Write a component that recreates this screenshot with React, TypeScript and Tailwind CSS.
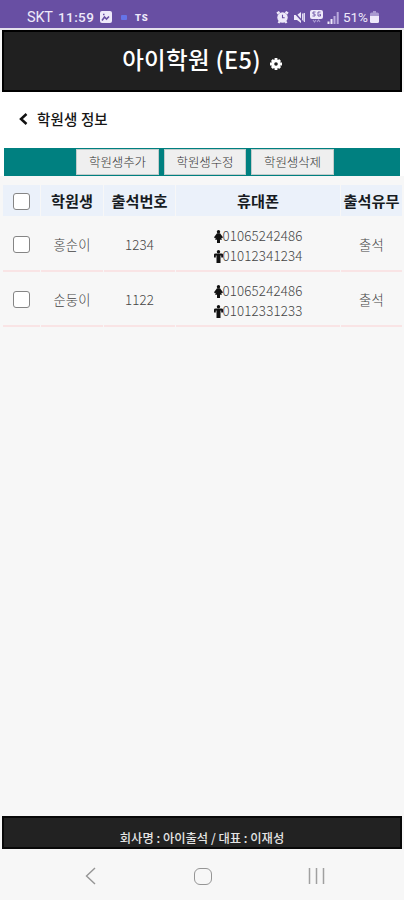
import React from "react";

const students = [
  { name: "홍순이", code: "1234", mother: "01065242486", father: "01012341234", status: "출석" },
  { name: "순둥이", code: "1122", mother: "01065242486", father: "01012331233", status: "출석" },
];

const columns = "grid grid-cols-[37px_62px_71px_164px_61px] gap-x-[1px] pl-[3px]";

function StatusBar() {
  return (
    <div className="flex h-[28px] items-start bg-[#684fa3] pt-[10px] pl-[27px] text-[#eee9fa]">
      <span className="w-[31px] text-[14.5px] leading-[15px] tracking-[-0.2px] whitespace-nowrap font-['Roboto',sans-serif]">SKT</span>
      <span className="w-[42px] text-[13.5px] leading-[15px] tracking-[0.4px] whitespace-nowrap font-medium font-['Roboto',sans-serif]">11:59</span>
      <svg className="mt-[1px] h-[12px] w-[12px]" viewBox="0 0 12 12">
        <rect width="12" height="12" rx="2" fill="currentColor" />
        <path d="M2 9.5 4.5 6l2 2L9 5.5M3 3.5h1.500" stroke="#684fa3" strokeWidth="1.6" fill="none" />
      </svg>
      <span className="mt-[5px] ml-[9px] h-[5px] w-[6px] rounded-[1px] bg-[#6574e8]" />
      <span className="mt-[3px] ml-[8px] text-[9.5px] leading-[10px] font-black tracking-[0.8px] font-['Roboto',sans-serif]">TS</span>
      <div className="ml-auto flex items-start pr-[25px]">
        <svg className="mt-[1px] mr-[4px] h-[13px] w-[13px]" viewBox="0 0 13 13">
          <path d="M1 2.5 3.5.8M12 2.5 9.5.8M2.5 12l1-1.5M10.5 12l-1-1.5" stroke="currentColor" strokeWidth="2.2" />
          <circle cx="6.5" cy="6.5" r="5.2" fill="currentColor" />
          <path d="M6.5 3.7v3h2.2" stroke="#684fa3" strokeWidth="1.1" fill="none" />
        </svg>
        <svg className="mt-[1px] mr-[5px] h-[13px] w-[12px]" viewBox="0 0 12 13">
          <path d="M1 4h3L8 1v11L4 9H1z" fill="currentColor" />
          <path d="M9.700 2.500v8M11.300 2v9" stroke="currentColor" strokeWidth="1.200" />
          <path d="M1 1 10.500 11.500" stroke="#684fa3" strokeWidth="1.500" />
        </svg>
        <svg className="mr-[4px] h-[14px] w-[13px]" viewBox="0 0 13 14">
          <rect y="0" width="13" height="9" rx="2" fill="currentColor" />
          <path d="M5.500 2H3v2h2v2H2.500M10.500 2H8v4h2.500V4.300H9.300" stroke="#684fa3" strokeWidth=".9" fill="none" />
          <path d="m3 10 1.500 2L6 10M7 12l1.500-2 1.500 2" stroke="#a99ad1" strokeWidth="1.200" fill="none" />
        </svg>
        <svg className="mt-[1px] mr-[4px] h-[13px] w-[12px]" viewBox="0 0 12 13">
          <path d="M1.500 13V10.500M4.500 13V8" stroke="currentColor" strokeWidth="2" />
          <path d="M7.500 13V5M10.700 13V1" stroke="#b9aadd" strokeWidth="2" />
        </svg>
        <span className="w-[27px] text-[13.5px] leading-[15px] tracking-[-0.1px] whitespace-nowrap font-['Roboto',sans-serif]">51%</span>
        <svg className="mt-[1px] h-[12px] w-[9px]" viewBox="0 0 9 12">
          <path d="M3 0h3v1.500h1.500Q9 1.500 9 3v2H0V3q0-1.500 1.500-1.500H3z" fill="#a99ad1" />
          <path d="M0 5h9v5.500Q9 12 7.500 12h-6Q0 12 0 10.500z" fill="currentColor" />
        </svg>
      </div>
    </div>
  );
}

function Gear() {
  return (
    <svg className="mt-[10px] ml-[9px] h-[12px] w-[12px]" viewBox="0 0 12 12">
      <g stroke="#fff" strokeWidth="2.8">
        <path d="M6 0v12M0 6h12M1.900 1.900l8.200 8.200M10.100 1.900 1.900 10.100" />
      </g>
      <circle cx="6" cy="6" r="4.600" fill="#fff" />
      <circle cx="6" cy="6" r="1.800" fill="#202020" />
    </svg>
  );
}

function Checkbox() {
  return (
    <input
      type="checkbox"
      className="block h-[17px] w-[17px] appearance-none rounded-[3px] border border-[#858585] bg-white checked:bg-[#008080]"
    />
  );
}

function Person({ female = false }: { female?: boolean }) {
  return (
    <svg className="h-[13px] w-[9px] shrink-0" viewBox="0 0 9 13" fill="#111">
      <circle cx="4.5" cy="1.700" r="1.700" />
      {female ? (
        <path d="M3 3.300h3L9 7.300l-1.200 1.200L6.700 7.500 8 9.700H6V13H3V9.700H1l1.300-2.200-1.100 1L0 7.300z" />
      ) : (
        <path d="M1.500 3.400h6Q9 3.400 9 4.500v3H7.200V5.500h-.7V13h-4V5.500h-.7v2H0v-3Q0 3.400 1.500 3.400z" />
      )}
    </svg>
  );
}

function ActionButton({ label, width }: { label: string; width: string }) {
  return (
    <button
      className={`${width} h-[26px] border border-[#c3cccb] bg-[#efefef] text-[12.5px] leading-[24px] font-light tracking-[-0.1px] whitespace-nowrap text-[#333]`}
    >
      {label}
    </button>
  );
}

export default function App() {
  return (
    <div className="flex h-[900px] w-[404px] flex-col overflow-hidden bg-[#f7f7f7] font-['Noto_Sans_CJK_KR',sans-serif]">
      <StatusBar />
      <div className="h-[2px] bg-[#e4e0ec]" />
      <header className="mx-[2px] flex h-[62px] shrink-0 items-center justify-center border-2 border-black bg-[#202020] pb-[4px] text-white">
        <h1 className="text-[23.5px] leading-[30px] font-medium tracking-[0.3px] whitespace-nowrap">아이학원 (E5)</h1>
        <Gear />
      </header>

      <div className="flex h-[56px] shrink-0 items-center bg-white pb-[3px] pl-[19px]">
        <svg className="mt-[1px] h-[12px] w-[9px]" viewBox="0 0 9 12">
          <path d="M7.500 1 2 6l5.500 5" stroke="#111" strokeWidth="2.500" fill="none" />
        </svg>
        <h2 className="ml-[9px] text-[14.5px] leading-[20px] font-medium tracking-[0.15px] whitespace-nowrap text-[#161616]">학원생 정보</h2>
      </div>

      <div className="bg-white px-[4px]">
        <div className="flex h-[28px] items-center gap-[5px] bg-[#008080] pl-[72px]">
          <ActionButton label="학원생추가" width="w-[83px]" />
          <ActionButton label="학원생수정" width="w-[82px]" />
          <ActionButton label="학원생삭제" width="w-[83px]" />
        </div>
      </div>

      <div className={`${columns} mt-[9px] mb-[1px] h-[31px] shrink-0 text-center text-[15.2px] leading-[31px] font-bold whitespace-nowrap text-[#171b22]`}>
        <div className="flex items-center bg-[#ebf1fa] pl-[10px] pt-[2px]"><Checkbox /></div>
        <div className="bg-[#ebf1fa]">학원생</div>
        <div className="bg-[#ebf1fa]">출석번호</div>
        <div className="bg-[#ebf1fa]">휴대폰</div>
        <div className="bg-[#ebf1fa]">출석유무</div>
      </div>

      {students.map((s) => (
        <div key={s.name} className={`${columns} h-[55px] shrink-0 text-center text-[13.3px] leading-[54px] font-light tracking-[0.15px] whitespace-nowrap text-[#444]`}>
          <div className="flex items-center border-b-2 border-[#f9e4e5] pl-[10px] pt-[2px]"><Checkbox /></div>
          <div className="h-[55px] border-b-2 border-[#f9e4e5] pt-[1px]">{s.name}</div>
          <div className="h-[55px] border-b-2 border-[#f9e4e5] pt-[1px]">{s.code}</div>
          <div className="flex flex-col items-center border-b-2 border-[#f9e4e5] pt-[9px] leading-[20px]">
            <div className="flex h-[20px] items-center"><Person female />{s.mother}</div>
            <div className="flex h-[20px] items-center"><Person />{s.father}</div>
          </div>
          <div className="h-[55px] border-b-2 border-[#f9e4e5] pt-[1px]">{s.status}</div>
        </div>
      ))}

      <footer className="mx-[2px] mt-auto h-[33px] shrink-0 border-2 border-[#080808] bg-[#222] pt-[9px] text-center text-[12.3px] leading-[22px] font-medium whitespace-nowrap text-[#e5e5e5]">
        회사명 : 아이출석 / 대표 : 이재성
      </footer>
      <nav className="flex h-[51px] shrink-0 items-center pt-[3px] pl-[85px]">
        <svg className="h-[18px] w-[11px]" viewBox="0 0 11 18">
          <path d="M10 1 1.500 9 10 17" stroke="#959595" strokeWidth="1.400" fill="none" />
        </svg>
        <span className="ml-[98px] h-[17px] w-[18px] rounded-[6px] border-[1.5px] border-[#959595]" />
        <svg className="ml-[96px] h-[16px] w-[17px]" viewBox="0 0 17 16">
          <path d="M1.500 0v16M8.500 0v16M15.500 0v16" stroke="#a0a0a0" strokeWidth="1.500" />
        </svg>
      </nav>
    </div>
  );
}
